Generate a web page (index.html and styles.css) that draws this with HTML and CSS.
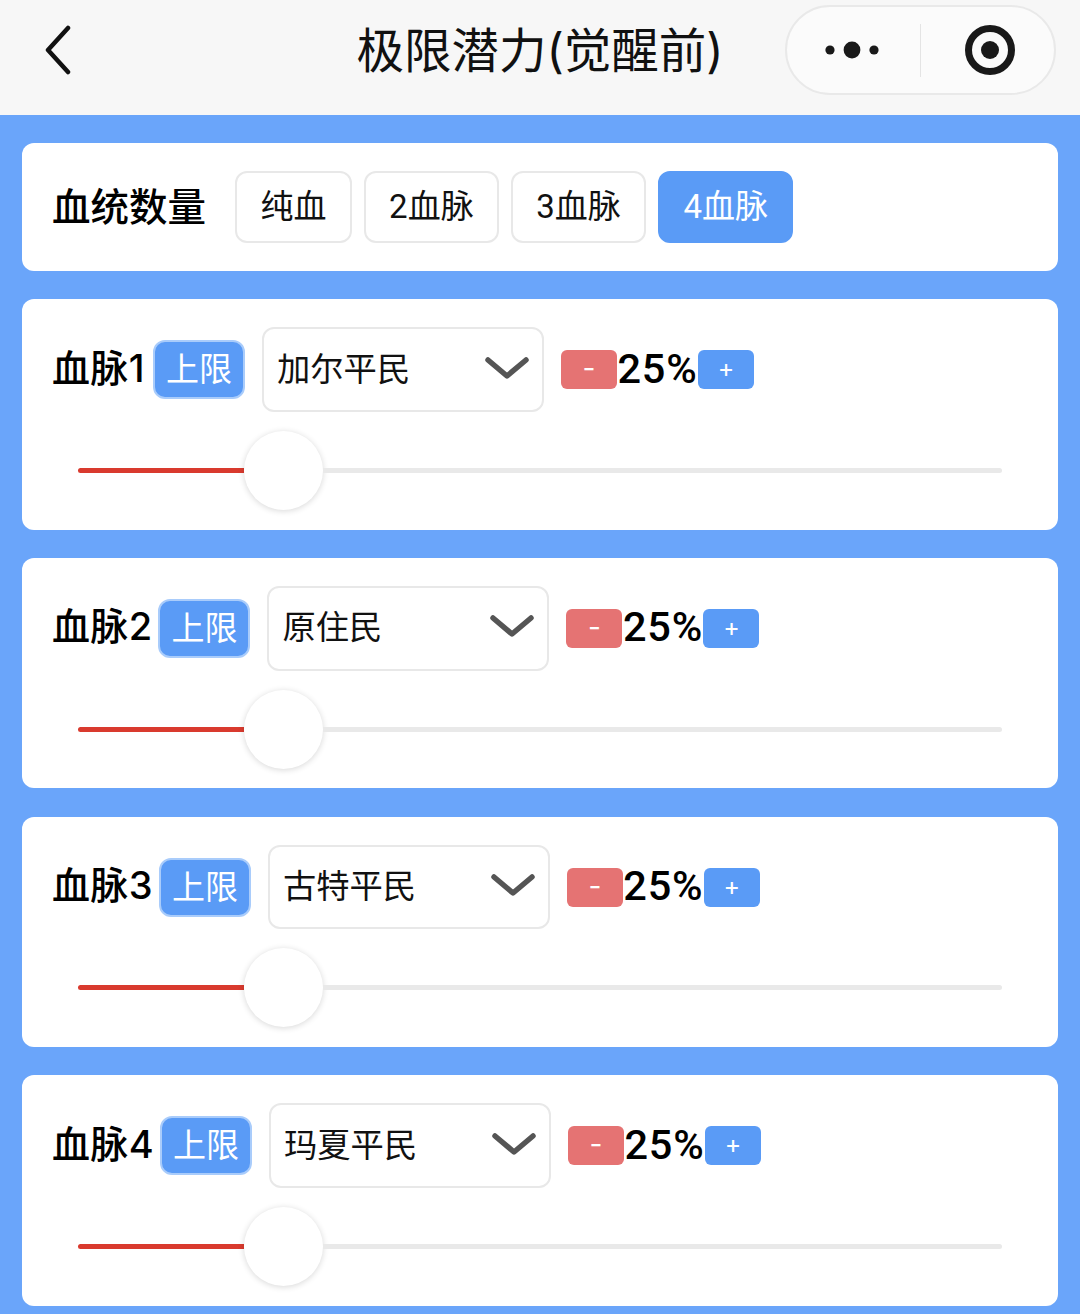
FILE: index.html
```html
<!DOCTYPE html>
<html lang="zh">
<head>
<meta charset="utf-8">
<title>极限潜力(觉醒前)</title>
<link rel="stylesheet" href="styles.css">
</head>
<body>
<header class="nav">
  <svg class="back" viewBox="0 0 30 50" aria-hidden="true"><path d="M25 3 L5 25 L25 47"/></svg>
  <h1 class="nav-title">极限潜力(觉醒前)</h1>
  <div class="capsule">
    <svg class="dots" viewBox="0 0 64 20" aria-hidden="true"><circle cx="10" cy="10" r="4.6"/><circle cx="32" cy="10" r="8.4"/><circle cx="54" cy="10" r="4.6"/></svg>
    <span class="capsule-line"></span>
    <svg class="target" viewBox="0 0 50 50" aria-hidden="true"><circle class="ring" cx="25" cy="25" r="21.5"/><circle cx="25" cy="25" r="9"/></svg>
  </div>
</header>
<main class="page">
  <section class="card count">
    <span class="count-label">血统数量</span>
    <div class="opts">
      <span class="opt">纯血</span>
      <span class="opt">2血脉</span>
      <span class="opt">3血脉</span>
      <span class="opt active">4血脉</span>
    </div>
  </section>

  <section class="card">
    <div class="row">
      <span class="name">血脉1</span><span class="tag">上限</span>
      <div class="select"><span>加尔平民</span><svg class="chev" viewBox="0 0 44 24" aria-hidden="true"><path d="M3 4 L22 20 L41 4"/></svg></div>
      <div class="stepper"><span class="step minus">-</span><span class="pct">25%</span><span class="step plus">+</span></div>
    </div>
    <div class="slider"><span class="fill"></span><span class="thumb"></span><span class="rest"></span></div>
  </section>

  <section class="card">
    <div class="row">
      <span class="name">血脉2</span><span class="tag">上限</span>
      <div class="select"><span>原住民</span><svg class="chev" viewBox="0 0 44 24" aria-hidden="true"><path d="M3 4 L22 20 L41 4"/></svg></div>
      <div class="stepper"><span class="step minus">-</span><span class="pct">25%</span><span class="step plus">+</span></div>
    </div>
    <div class="slider"><span class="fill"></span><span class="thumb"></span><span class="rest"></span></div>
  </section>

  <section class="card">
    <div class="row">
      <span class="name">血脉3</span><span class="tag">上限</span>
      <div class="select"><span>古特平民</span><svg class="chev" viewBox="0 0 44 24" aria-hidden="true"><path d="M3 4 L22 20 L41 4"/></svg></div>
      <div class="stepper"><span class="step minus">-</span><span class="pct">25%</span><span class="step plus">+</span></div>
    </div>
    <div class="slider"><span class="fill"></span><span class="thumb"></span><span class="rest"></span></div>
  </section>

  <section class="card">
    <div class="row">
      <span class="name">血脉4</span><span class="tag">上限</span>
      <div class="select"><span>玛夏平民</span><svg class="chev" viewBox="0 0 44 24" aria-hidden="true"><path d="M3 4 L22 20 L41 4"/></svg></div>
      <div class="stepper"><span class="step minus">-</span><span class="pct">25%</span><span class="step plus">+</span></div>
    </div>
    <div class="slider"><span class="fill"></span><span class="thumb"></span><span class="rest"></span></div>
  </section>
</main>
</body>
</html>
```
FILE: styles.css
```css
* { box-sizing: border-box; }
html, body { margin: 0; padding: 0; }
body {
  width: 1080px;
  height: 1314px;
  overflow: hidden;
  background: #6aa5fa;
  color: #000;
  font-family: Inter, "Noto Sans CJK SC", sans-serif;
}
.nav {
  height: 115px;
  background: #f7f7f7;
  display: grid;
  grid-template-columns: 271px auto 271px;
  justify-content: space-between;
  align-items: center;
  padding: 0 24px 15px 43px;
}
.back { width: 30px; height: 50px; fill: none; stroke: #111; stroke-width: 4.5; stroke-linecap: round; stroke-linejoin: round; }
.nav-title {
  margin: 2px 0 0 -19px;
  font-size: 47.5px;
  font-weight: 400;
  line-height: 56px;
  color: #111;
  white-space: nowrap;
}
.capsule {
  justify-self: end;
  width: 271px;
  height: 90px;
  border: 2px solid #e9e9e9;
  border-radius: 45px;
  background: #fbfbfb;
  display: flex;
  align-items: center;
  padding-left: 33px;
}
.dots { width: 64px; height: 20px; fill: #191919; }
.capsule-line { width: 1px; height: 53px; background: #e4e4e4; margin-left: 36px; }
.target { width: 50px; height: 50px; margin-left: 44px; fill: #191919; }
.target .ring { fill: none; stroke: #191919; stroke-width: 7; }

.page {
  padding: 28px 22px 0;
  display: flex;
  flex-direction: column;
  gap: 28.4px;
}
.card {
  background: #fff;
  border-radius: 12px;
  padding: 28px 30px 20px;
  height: 230.3px;
}
.count {
  height: 128px;
  padding: 28px 30px;
  display: flex;
  align-items: center;
}
.count-label { font-size: 38.5px; font-weight: 500; line-height: 72px; white-space: nowrap; width: 183px; flex: none; }
.opts { display: flex; gap: 11.6px; }
.opt {
  height: 72px;
  padding: 0 23.5px;
  border: 2px solid #e8e8e8;
  border-radius: 12px;
  font-family: Roboto, "Noto Sans CJK SC", sans-serif;
  font-size: 33px;
  line-height: 68px;
  color: #111;
  white-space: nowrap;
}
.opt.active { background: #5a9bf6; border-color: #5a9bf6; color: #fff; }

.row { display: flex; align-items: center; height: 84.5px; }
.name { font-size: 38px; font-weight: 500; letter-spacing: .35px; line-height: 50px; white-space: nowrap; min-width: 95px; padding-bottom: 4px; }
.tag {
  width: 92px;
  height: 59px;
  margin-left: 6px;
  border: 2px solid #a9ccfb;
  border-radius: 12px;
  background: #5a9bf6;
  color: #fff;
  font-size: 33px;
  line-height: 54px;
  text-align: center;
  flex: none;
}
.select {
  width: 282px;
  height: 84.5px;
  margin-left: 17px;
  border: 2px solid #e8e8e8;
  border-radius: 12px;
  display: flex;
  align-items: center;
  justify-content: space-between;
  padding: 0 13px 0 13px;
  font-size: 33.3px;
  color: #111;
  flex: none;
}
.select span { line-height: 40px; padding-bottom: 2px; }
.chev { width: 44px; height: 24px; margin-bottom: 4px; fill: none; stroke: #555; stroke-width: 5.5; stroke-linecap: round; stroke-linejoin: round; }
.stepper { display: flex; align-items: center; margin-left: 17px; }
.step {
  width: 56px;
  height: 39px;
  border-radius: 6px;
  color: #fff;
  line-height: 37px;
  text-align: center;
}
.minus { background: #e57373; font-size: 28px; }
.plus { background: #5a9bf6; font-size: 25px; }
.pct {
  font-family: Roboto, sans-serif;
  font-size: 41.5px;
  font-weight: 500;
  letter-spacing: .8px;
  line-height: 48px;
  padding-bottom: 2px;
  width: 81px;
  text-align: center;
  white-space: nowrap;
}

.slider { display: flex; align-items: center; height: 79px; margin: 19px 26px 0; }
.fill { width: 166px; height: 5px; background: #d93a2e; border-radius: 3px 0 0 3px; }
.thumb { width: 79px; height: 79px; border-radius: 50%; background: #fff; box-shadow: 0 1px 6px rgba(0,0,0,.16); flex: none; }
.rest { flex: 1; height: 5px; background: #e9e9e9; border-radius: 0 3px 3px 0; }
```
